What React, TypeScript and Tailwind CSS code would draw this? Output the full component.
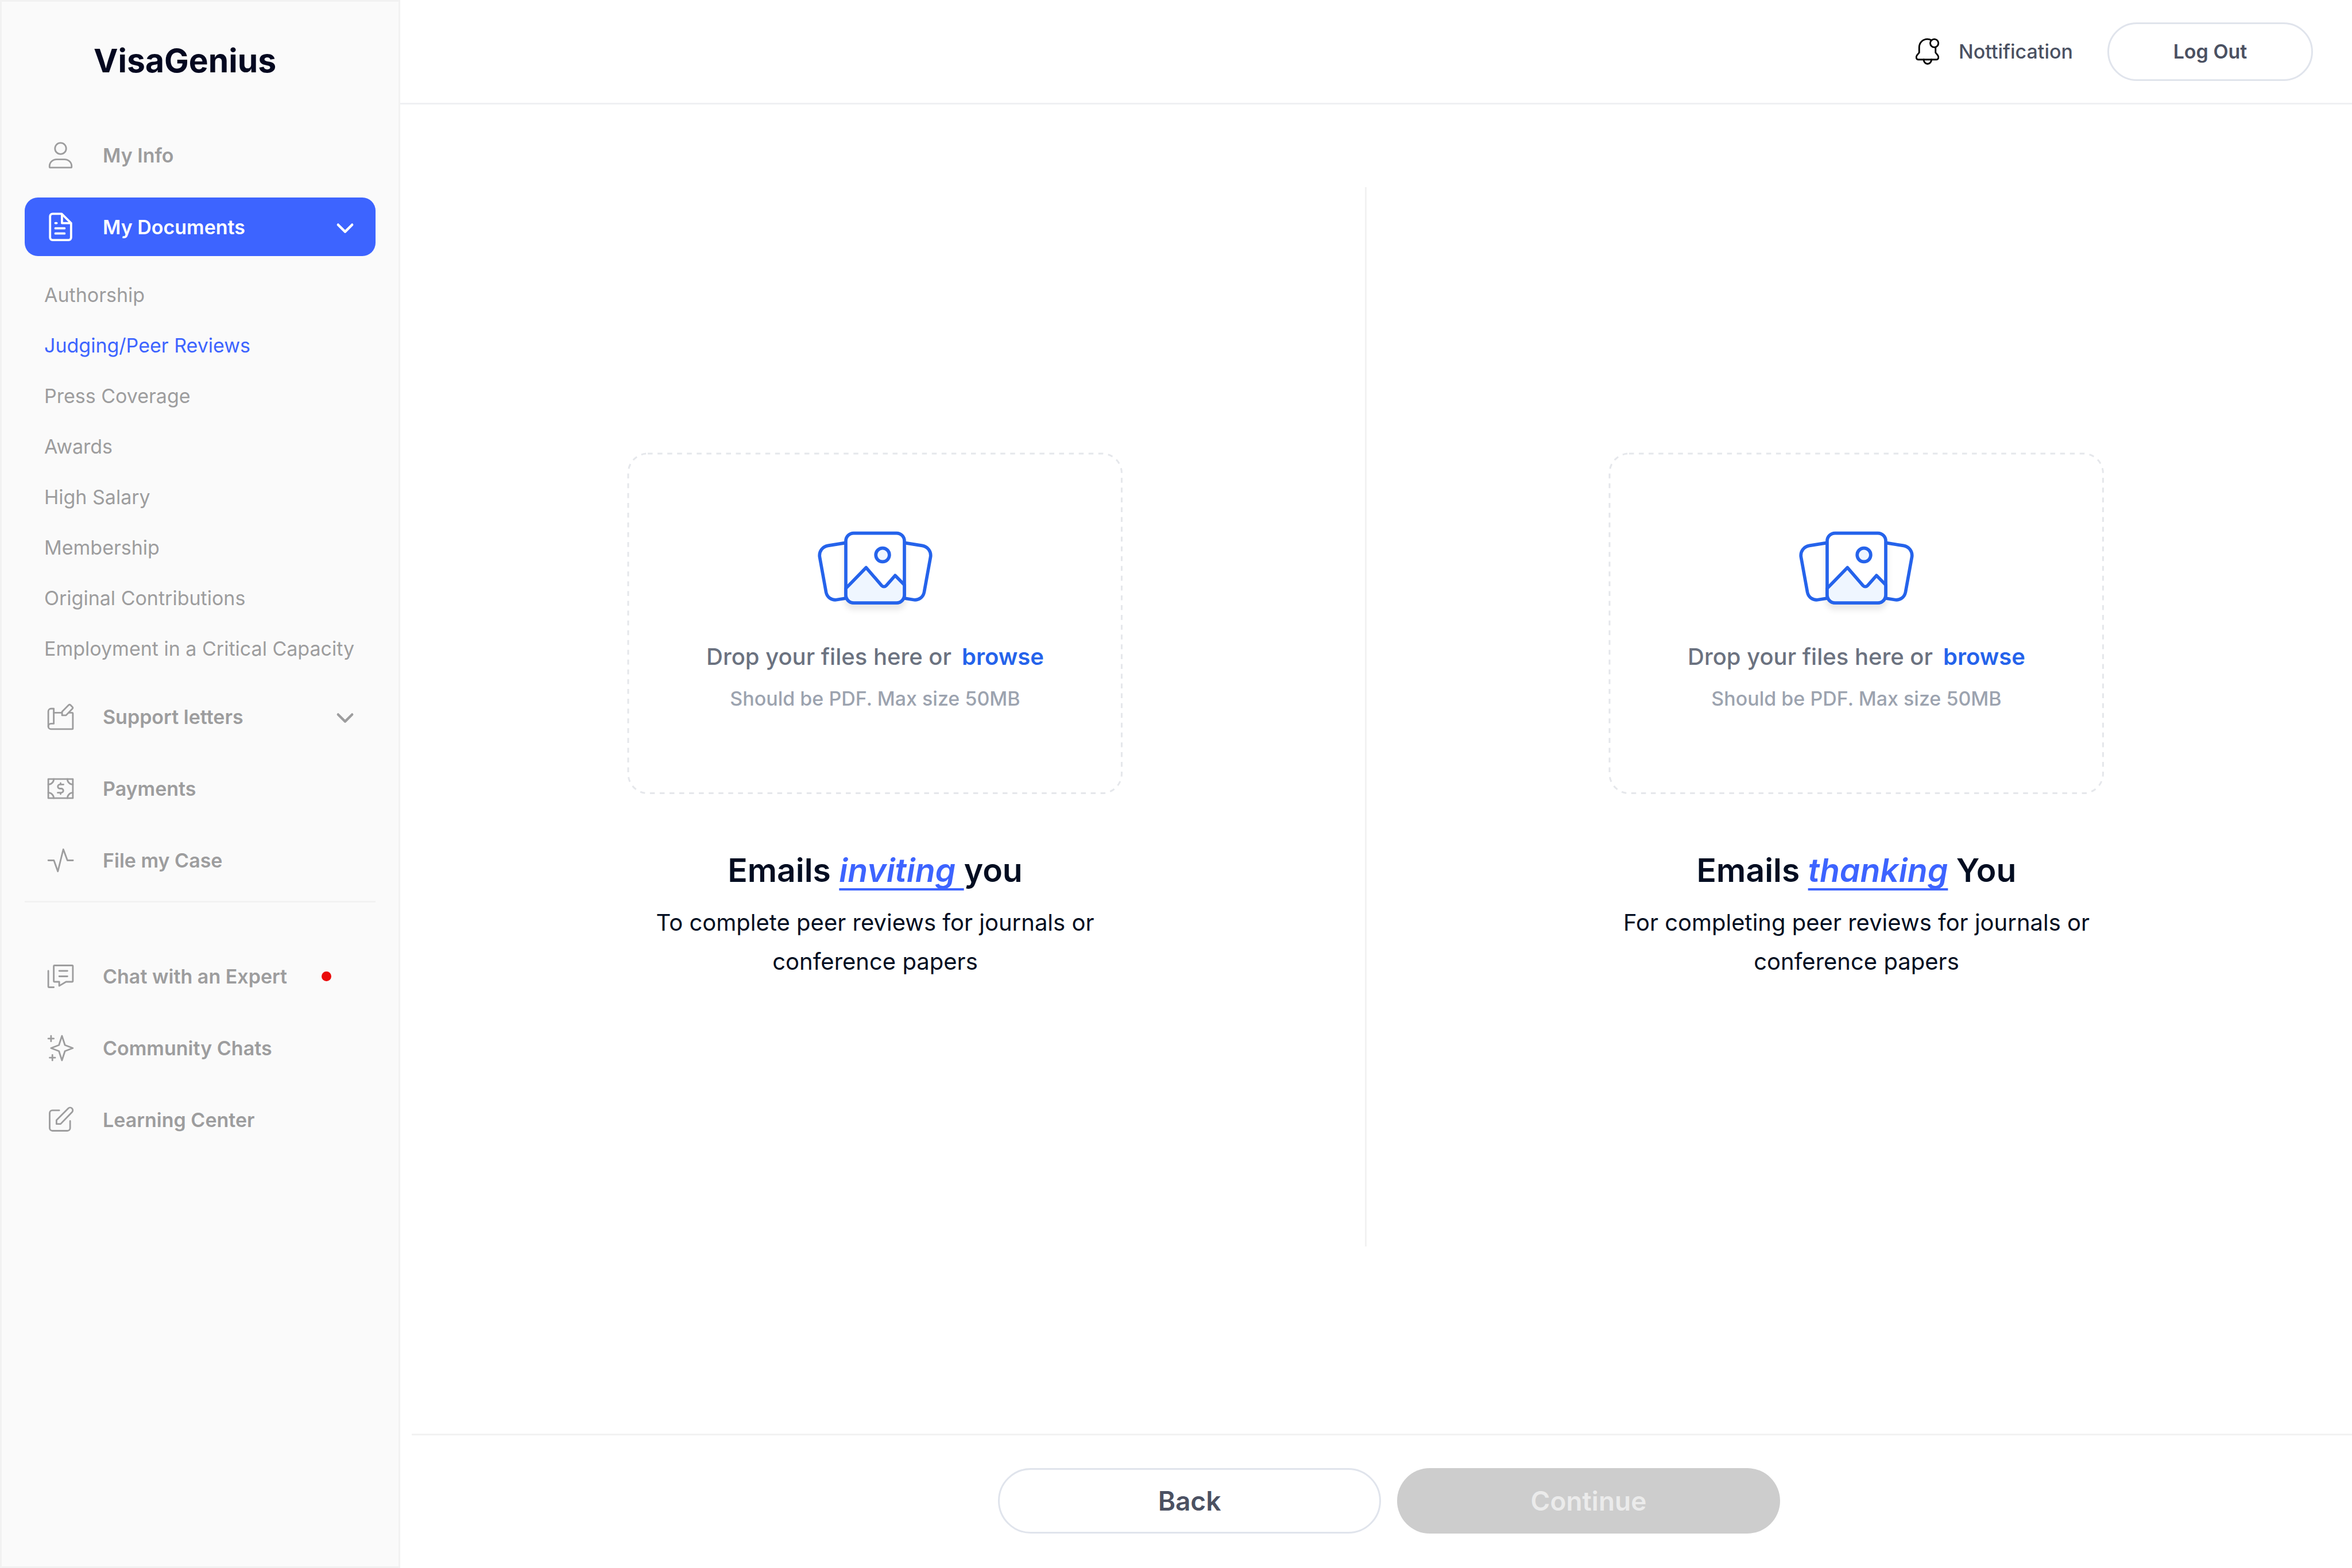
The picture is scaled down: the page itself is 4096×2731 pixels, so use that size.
import type { ReactNode } from "react";

type IconProps = { viewBox: string; strokeWidth?: number; children: ReactNode };

function Icon({ viewBox, strokeWidth = 12, children }: IconProps) {
  return (
    <svg
      aria-hidden="true"
      className="size-[57px] shrink-0"
      viewBox={viewBox}
      fill="none"
      stroke="currentColor"
      strokeWidth={strokeWidth}
      strokeLinecap="round"
      strokeLinejoin="round"
    >
      {children}
    </svg>
  );
}

const UserIcon = () => (
  <Icon viewBox="0 0 240 240">
    <circle cx="120" cy="70" r="41" />
    <path d="M91 150h58c29 0 52 22 52 50v4a6 6 0 0 1-6 6H45a6 6 0 0 1-6-6v-4c0-28 23-50 52-50z" />
  </Icon>
);

const DocumentIcon = () => (
  <Icon viewBox="0 0 240 240" strokeWidth={16}>
    <path d="M61 23h67l69 68v106a18 18 0 0 1-18 18H61a18 18 0 0 1-18-18V41a18 18 0 0 1 18-18z" />
    <path d="M130 27v64h63M82 91h9M82 129h67M82 167h67" />
  </Icon>
);

const LetterIcon = () => (
  <Icon viewBox="24 18 240 240">
    <path d="M94 108V78H74a20 20 0 0 0-20 20v110a20 20 0 0 0 20 20h154a6 6 0 0 0 6-6V114a6 6 0 0 0-6-6h-22" />
    <path d="M152 108H94v80H74a20 20 0 0 0-20 20" />
    <path d="M155 127v-27l49-49a9 9 0 0 1 12 0l15 15a9 9 0 0 1 0 12l-47 49z" />
  </Icon>
);

const PaymentIcon = () => (
  <Icon viewBox="24 546 240 240">
    <path d="M54 596h180v140H54z" />
    <path d="M94 596a40 40 0 0 1-40 40M194 596a40 40 0 0 0 40 40M94 736a40 40 0 0 0-40-40M194 736a40 40 0 0 1 40-40" />
    <path d="M165 636h-26a15 15 0 0 0 0 30h10a15 15 0 0 1 0 30h-26M144 626v10M144 696v10" />
  </Icon>
);

const PulseIcon = () => (
  <Icon viewBox="24 1074 240 240">
    <path d="M54 1194h41l29 81 40-162 30 81h41" />
  </Icon>
);

const ChatIcon = () => (
  <Icon viewBox="24 6 240 240">
    <path d="M100 46h128a6 6 0 0 1 6 6v108a6 6 0 0 1-6 6h-44l-50 30v-30h-34a6 6 0 0 1-6-6V52a6 6 0 0 1 6-6z" />
    <path d="M134 86h60M134 126h60M54 86v114a6 6 0 0 0 6 6h34" />
  </Icon>
);

const SparkleIcon = () => (
  <Icon viewBox="24 534 240 240">
    <path d="M154 564l22 68 58 22-58 22-22 68-22-68-58-22 58-22z" />
    <path d="M74 564v40M54 584h40M84 704v40M64 724h40" />
  </Icon>
);

const EditIcon = () => (
  <Icon viewBox="24 1062 240 240">
    <path d="M134 1112H84a20 20 0 0 0-20 20v110a20 20 0 0 0 20 20h110a20 20 0 0 0 20-20v-52" />
    <path d="M114 1212v-28l86-86a19 19 0 0 1 28 27l-84 87z" />
  </Icon>
);

const BellIcon = () => (
  <Icon viewBox="0 0 80 80" strokeWidth={4}>
    <path d="M50 13c-3-2-7-3-10-3-11 0-20 9-20 20v13l-5 6c-4 5-2 11 3 11h44c5 0 7-6 3-11l-5-6V31" />
    <circle cx="57" cy="20" r="10" />
    <path d="M31 60a9 10 0 0 0 19 0" />
  </Icon>
);

const Chevron = () => (
  <svg
    aria-hidden="true"
    className="ml-auto size-[46px] shrink-0"
    viewBox="0 0 64 64"
    fill="none"
    stroke="currentColor"
    strokeWidth="6"
    strokeLinecap="round"
    strokeLinejoin="round"
  >
    <path d="M15 27l17 17 17-17" />
  </svg>
);

type NavItemProps = {
  icon: ReactNode;
  label: string;
  active?: boolean;
  expandable?: boolean;
  unread?: boolean;
};

function NavItem({ icon, label, active, expandable, unread }: NavItemProps) {
  const base =
    "flex h-[102px] w-full items-center gap-[45px] rounded-[23px] pr-[30px] pl-[34px] text-left text-[34px] leading-[51px] font-semibold";
  const tone = active ? "bg-[#3d64ff] text-white" : "text-[#9d9d9e]";
  const content = (
    <>
      {icon}
      <span className="whitespace-nowrap">{label}</span>
      {expandable && <Chevron />}
      {unread && <span className="ml-[15px] size-[17px] rounded-full bg-[#ea0a0a]" />}
    </>
  );
  return expandable ? (
    <button type="button" aria-expanded={!!active} className={`${base} ${tone}`}>
      {content}
    </button>
  ) : (
    <a href="#" className={`${base} ${tone}`}>
      {content}
    </a>
  );
}

const documentSections = [
  "Authorship",
  "Judging/Peer Reviews",
  "Press Coverage",
  "Awards",
  "High Salary",
  "Membership",
  "Original Contributions",
  "Employment in a Critical Capacity",
];

function Sidebar() {
  return (
    <aside className="w-[697px] shrink-0 border-[3px] border-[#f2f2f2] bg-[#fafafa] px-[40px] pt-[69px]">
      <p className="pl-[120px] text-[57px] leading-[68px] font-bold text-[#040820]">VisaGenius</p>
      <nav className="mt-[79px]" aria-label="Main">
        <div className="flex flex-col gap-[23px]">
          <NavItem icon={<UserIcon />} label="My Info" />
          <NavItem icon={<DocumentIcon />} label="My Documents" active expandable />
        </div>
        <ul className="my-[42px] flex flex-col gap-[37px] pl-[34px] text-[34px] leading-[51px]">
          {documentSections.map((section) => (
            <li key={section}>
              <a
                href="#"
                className={
                  section === "Judging/Peer Reviews"
                    ? "block whitespace-nowrap text-[#3d64ff]"
                    : "block whitespace-nowrap text-[#9d9d9e]"
                }
              >
                {section}
              </a>
            </li>
          ))}
        </ul>
        <div className="flex flex-col gap-[23px]">
          <NavItem icon={<LetterIcon />} label="Support letters" expandable />
          <NavItem icon={<PaymentIcon />} label="Payments" />
          <NavItem icon={<PulseIcon />} label="File my Case" />
        </div>
        <hr className="mt-[20px] mb-[77px] border-t-[3px] border-[#f2f2f2]" />
        <div className="flex flex-col gap-[23px]">
          <NavItem icon={<ChatIcon />} label="Chat with an Expert" unread />
          <NavItem icon={<SparkleIcon />} label="Community Chats" />
          <NavItem icon={<EditIcon />} label="Learning Center" />
        </div>
      </nav>
    </aside>
  );
}

function Header() {
  return (
    <header className="flex h-[182px] items-center justify-end gap-[60px] border-b-[3px] border-[#eff0f3] pr-[68px]">
      <button type="button" className="flex items-center gap-[26px] text-[34px] leading-[51px] font-medium text-[#4b5162]">
        <span className="text-black">
          <BellIcon />
        </span>
        Nottification
      </button>
      <button
        type="button"
        className="h-[102px] w-[358px] rounded-full border-[3px] border-[#e0e4ec] text-[34px] leading-[51px] font-semibold text-[#4b5162]"
      >
        Log Out
      </button>
    </header>
  );
}

function PicturesIllustration() {
  return (
    <svg
      aria-hidden="true"
      className="h-[152px] w-[204px] overflow-visible"
      viewBox="116 117 860 640"
      fill="none"
      stroke="#2563eb"
      strokeWidth="24"
      strokeLinecap="round"
      strokeLinejoin="round"
    >
      <path d="M331 211l-131 21c-40 7-67 41-61 83l47 259c8 38 40 61 80 55l65-11" />
      <path d="M761 211l131 21c40 7 67 41 61 83l-47 259c-8 38-40 61-80 55l-65-11" />
      <rect
        className="drop-shadow-[0_40px_20px_rgba(0,0,0,0.09)]"
        x="331"
        y="140"
        width="430"
        height="512"
        rx="58"
        fill="white"
      />
      <path
        d="M331 546l149-153 114 132a23 23 0 0 0 34 0l65-74 68 69v74a58 58 0 0 1-58 58H389a58 58 0 0 1-58-58z"
        fill="#eff6ff"
      />
      <circle cx="601" cy="300" r="50" fill="#eff6ff" />
    </svg>
  );
}

type UploadPanelProps = { id: string; title: ReactNode; description: string };

function UploadPanel({ id, title, description }: UploadPanelProps) {
  return (
    <section aria-labelledby={id} className="flex w-[862px] flex-col items-center">
      <div className="relative flex h-[594px] w-full flex-col items-center pt-[134px]">
        <svg aria-hidden="true" className="absolute inset-0 size-full overflow-visible" fill="none">
          <rect
            x="1"
            y="1"
            width="99.7%"
            height="99.6%"
            rx="34"
            stroke="#e5e7eb"
            strokeWidth="3"
            strokeDasharray="8.53 8.53"
          />
        </svg>
        <PicturesIllustration />
        <p className="mt-[40px] flex gap-[18px] text-[40px] leading-[57px] font-medium text-[#6b7280]">
          Drop your files here or
          <button type="button" className="relative font-semibold text-[#2563eb]">
            browse
          </button>
        </p>
        <p className="mt-[19px] text-[34px] leading-[51px] font-medium text-[#9ca3af]">
          Should be PDF. Max size 50MB
        </p>
      </div>
      <h2 id={id} className="mt-[90px] text-[57px] leading-[85px] font-semibold whitespace-pre text-[#020d21]">
        {title}
      </h2>
      <p className="mt-[15px] text-center text-[40px] leading-[68px] text-[#020d21]">{description}</p>
    </section>
  );
}

function Highlight({ children }: { children: string }) {
  return (
    <em className="text-[#3d64ff] underline decoration-[4px] underline-offset-[11px] [text-decoration-skip-ink:none]">
      {children}
    </em>
  );
}

export default function App() {
  return (
    <div className="flex min-h-screen bg-white font-['Inter',sans-serif]">
      <Sidebar />
      <div className="flex min-w-0 flex-1 flex-col">
        <Header />
        <main className="flex flex-1 items-center justify-center gap-[422px] pt-[144px] pr-[36px] pb-[326px]">
          <UploadPanel
            id="inviting"
            title={
              <>
                Emails <Highlight>{"inviting "}</Highlight>you
              </>
            }
            description="To complete peer reviews for journals or conference papers"
          />
          <div className="w-[3px] self-stretch bg-[#f2f2f2]" />
          <UploadPanel
            id="thanking"
            title={
              <>
                Emails <Highlight>thanking</Highlight> You
              </>
            }
            description="For completing peer reviews for journals or conference papers"
          />
        </main>
        <footer className="ml-[20px] flex justify-center gap-[28px] border-t-[3px] border-[#f2f2f2] pt-[57px] pb-[60px] pl-[25px]">
          <button
            type="button"
            className="h-[114px] w-[667px] rounded-full border-[3px] border-[#e0e4ec] text-[46px] font-semibold text-[#4b5162]"
          >
            Back
          </button>
          <button
            type="button"
            disabled
            className="h-[114px] w-[667px] rounded-full bg-[#cdcdcd] text-[46px] font-semibold text-[#ebebeb]"
          >
            Continue
          </button>
        </footer>
      </div>
    </div>
  );
}
